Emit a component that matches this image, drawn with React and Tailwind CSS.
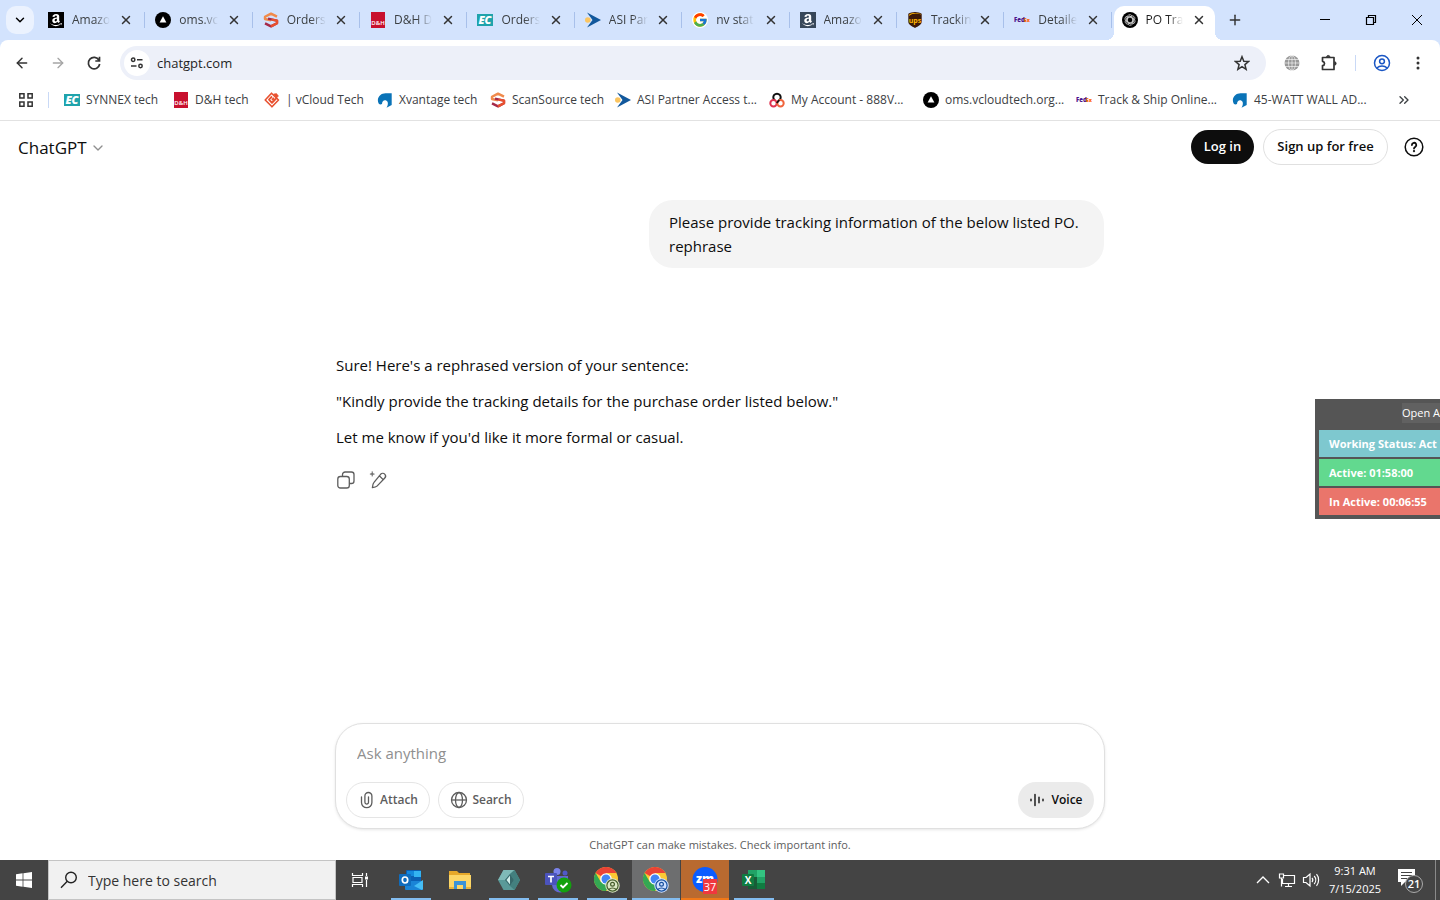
import React from 'react';
import clsx from 'clsx';
import { FcGoogle } from 'react-icons/fc';
import { FaAmazon } from 'react-icons/fa';
import { ArrowLeft, ArrowRight, ChevronDown, ChevronsRight, Plus, X } from 'lucide-react';

/* ---------- Favicons ---------- */

const AmazonIcon = ({ dark }) => (
    <span className={clsx('flex h-4 w-4 items-center justify-center text-white', dark ? 'bg-[#37475a]' : 'bg-black')}>
        <FaAmazon className="h-3.5 w-3.5" />
    </span>
);

const OmsIcon = () => (
    <svg viewBox="0 0 16 16" className="h-4 w-4">
        <circle cx="8" cy="8" r="8" fill="#000" />
        <path d="M8 4.2 11.4 10.6H4.6Z" fill="#fff" />
    </svg>
);

const ScanSourceIcon = () => (
    <svg viewBox="0 0 16 16" className="h-4 w-4" fill="none" strokeWidth="2.4" strokeLinejoin="round">
        <path d="M14 4.6 8 1.6 2 4.8V7l6 1.4" stroke="#f08a4b" />
        <path d="M5 6.6 14 8.6v2.6L8 14.4 2 11.4" stroke="#a52a4a" />
        <path d="M8.5 7.6 14 8.6v2.6L8 14.4" stroke="#e8502f" />
    </svg>
);

const DhIcon = () => (
    <svg viewBox="0 0 16 16" className="h-4 w-4">
        <rect x="1" width="14" height="16" fill="#c8102e" />
        <text x="8" y="13" fill="#fff" fontSize="6" fontWeight="600" textAnchor="middle" fontFamily="Open Sans">D&amp;H</text>
    </svg>
);

const EcIcon = () => (
    <svg viewBox="0 0 16 16" className="h-4 w-4">
        <rect y="2" width="16" height="12" fill="#1fa3ab" />
        <text x="8" y="12" fill="#fff" fontSize="11" fontWeight="800" fontStyle="italic" textAnchor="middle" fontFamily="Open Sans">EC</text>
    </svg>
);

const AsiIcon = () => (
    <svg viewBox="0 0 16 16" className="h-4 w-4">
        <path d="M2 0.5 16 8 2 15.5 7.5 8Z" fill="#12589c" />
        <circle cx="2.8" cy="8" r="2.8" fill="#fbc560" />
    </svg>
);

const GoogleIcon = () => (
    <span className="flex h-4 w-4 items-center justify-center rounded-full bg-white">
        <FcGoogle className="h-4 w-4" />
    </span>
);

const UpsIcon = () => (
    <svg viewBox="0 0 16 16" className="h-4 w-4">
        <path d="M8 0c2.5 0 5 .7 6.7 1.8V9.5c0 3.5-3.5 4.6-6.7 6.5-3.2-1.9-6.7-3-6.7-6.5V1.8C3 .7 5.5 0 8 0Z" fill="#3d1a08" />
        <path d="M2.2 3.9c3.2-2.9 8.4-2.8 11.7-1.4V2C11 .6 5 .3 2.2 2.4Z" fill="#ffb500" />
        <text x="8" y="10.5" fill="#ffb500" fontSize="7" fontWeight="700" textAnchor="middle" fontFamily="Open Sans">ups</text>
    </svg>
);

const FedexIcon = () => (
    <svg viewBox="0 0 16 16" className="h-4 w-4">
        <text x="0" y="10" fill="#4d148c" fontSize="6" fontWeight="800" fontFamily="Open Sans">Fed</text>
        <text x="10" y="10" fill="#ff6200" fontSize="5" fontWeight="800" fontFamily="Open Sans">Ex</text>
    </svg>
);

const VcloudIcon = () => (
    <svg viewBox="0 0 16 16" className="h-4 w-4" fill="none" stroke="#e8502f" strokeLinejoin="round">
        <path d="M7.5 1.2 14.5 8 8 14.8 1.2 8Z" strokeWidth="1.6" />
        <path d="M8 4.5 5 7.6l3 3.3 5-5.2M8 8l2-2" strokeWidth="1.8" />
        <path d="m9.5 2 3-.5 2 2.5-2 2Z" fill="#e8502f" strokeWidth="0.5" />
    </svg>
);

const XvantageIcon = () => (
    <svg viewBox="0 0 16 16" className="h-4 w-4" fill="#0a73b7">
        <path d="M1.8 11.8C-1.200 6 3.500 1.300 8.500 1.300h6.200V13l-5.200 2.800c1.600-2.800 2-6 0-7C7.200 7.600 5.200 9 5 12c-1.200.6-2.300.5-3.200-.2Z" />
    </svg>
);

const AccountIcon = () => (
    <svg viewBox="0 0 16 16" className="h-4 w-4" fill="none" strokeWidth="2">
        <path d="M6 8.500A3.700 3.700 0 1 1 10 8.500" stroke="#111" />
        <circle cx="4.5" cy="11.2" r="3.2" stroke="#e0314f" />
        <circle cx="11.5" cy="11.2" r="3.2" stroke="#f0643c" />
        <path d="M10.200 8 7.800 11" stroke="#111" />
    </svg>
);

const GptIcon = () => (
    <svg viewBox="0 0 16 16" className="h-4 w-4" fill="none" stroke="#ddd" strokeWidth="0.7">
        <circle cx="8" cy="8" r="8" fill="#000" stroke="none" />
        {[0, 60, 120, 180, 240, 300].map((angle) => (
            <path key={angle} d="M5.2 9.6V5.300a2.600 2.600 0 0 1 4.700-1.600M5.2 6.500 9 4.300l2.800 1.600" transform={`rotate(${angle} 8 8)`} />
        ))}
    </svg>
);

/* ---------- Browser chrome ---------- */

const tabs = [
    { title: 'Amazo', icon: <AmazonIcon /> },
    { title: 'oms.vc', icon: <OmsIcon /> },
    { title: 'Orders', icon: <ScanSourceIcon /> },
    { title: 'D&H D', icon: <DhIcon /> },
    { title: 'Orders', icon: <EcIcon /> },
    { title: 'ASI Par', icon: <AsiIcon /> },
    { title: 'nv stat', icon: <GoogleIcon /> },
    { title: 'Amazo', icon: <AmazonIcon dark /> },
    { title: 'Trackin', icon: <UpsIcon /> },
    { title: 'Detaile', icon: <FedexIcon /> },
    { title: 'PO Tra', icon: <GptIcon />, active: true },
];

const bookmarks = [
    { title: 'SYNNEX tech', icon: <EcIcon />, width: 'w-[109px]' },
    { title: 'D&H tech', icon: <DhIcon />, width: 'w-[91px]' },
    { title: '| vCloud Tech', icon: <VcloudIcon />, width: 'w-[113px]' },
    { title: 'Xvantage tech', icon: <XvantageIcon />, width: 'w-[113px]' },
    { title: 'ScanSource tech', icon: <ScanSourceIcon />, width: 'w-[125px]' },
    { title: 'ASI Partner Access t...', icon: <AsiIcon />, width: 'w-[154px]' },
    { title: 'My Account - 888V...', icon: <AccountIcon />, width: 'w-[154px]' },
    { title: 'oms.vcloudtech.org...', icon: <OmsIcon />, width: 'w-[153px]' },
    { title: 'Track & Ship Online...', icon: <FedexIcon />, width: 'w-[156px]' },
    { title: '45-WATT WALL AD...', icon: <XvantageIcon />, width: 'w-[150px]' },
];

const Tab = ({ title, icon, active }) => (
    <div className={clsx('relative flex h-[34px] min-w-0 flex-1 items-center pb-1.5', active && 'z-10')}>
        {active && (
            <div className="absolute inset-y-0 right-1 left-[2px] rounded-t-[10px] bg-white">
                <div className="absolute bottom-0 -left-2 h-2 w-2 bg-[radial-gradient(circle_at_0_0,transparent_8px,white_8px)]" />
                <div className="absolute -right-2 bottom-0 h-2 w-2 bg-[radial-gradient(circle_at_100%_0,transparent_8px,white_8px)]" />
            </div>
        )}
        <button type="button" className="relative flex min-w-0 flex-1 items-center gap-2 pl-[10px] text-left">
            <span className="shrink-0">{icon}</span>
            <span className={clsx('shrink-0 text-[12px] leading-4 whitespace-nowrap [mask-image:linear-gradient(to_right,black_60%,transparent)]', active ? 'text-[#1f1f1f]' : 'text-[#3c4043]')}>
                {title}
            </span>
        </button>
        <button type="button" aria-label={`Close ${title}`} className={clsx('relative flex h-4 w-4 shrink-0 items-center justify-center text-[#333]', active ? 'mr-3' : 'mr-2.5')}>
            <X className="h-3.5 w-3.5" strokeWidth={2.5} />
        </button>
        {!active && <span className="h-4 w-px bg-[#a8c0ea]" />}
    </div>
);

const TabStrip = () => (
    <div className="flex h-10 items-end bg-[#d3e3fd]">
        <button type="button" aria-label="Search tabs" className="mr-1 mb-1.5 ml-1.5 flex h-7 w-7 shrink-0 items-center justify-center rounded-[10px] bg-[#ebf2fe]">
            <ChevronDown className="h-3.5 w-3.5" strokeWidth={2.5} />
        </button>
        <div className="flex max-w-[1181px] min-w-0 flex-1">
            {tabs.map((tab, i) => <Tab key={i} {...tab} />)}
        </div>
        <button type="button" aria-label="New tab" className="mb-3 ml-2 flex h-4 w-4 shrink-0 items-center justify-center">
            <Plus className="h-4 w-4 shrink-0 text-[#333]" strokeWidth={2.2} />
        </button>
        <div className="ml-auto flex h-10 shrink-0 text-black">
            <button type="button" aria-label="Minimize" className="flex w-[46px] items-center justify-center">
                <svg viewBox="0 0 12 12" className="h-3 w-3" stroke="currentColor"><path d="M1 5.5h10" /></svg>
            </button>
            <button type="button" aria-label="Restore" className="flex w-[46px] items-center justify-center">
                <svg viewBox="0 0 12 12" className="h-3 w-3" fill="none" stroke="currentColor" strokeWidth="1.2">
                    <path d="M1.5 3.5h7v7h-7ZM3.5 3.5v-2h7v7h-2" />
                </svg>
            </button>
            <button type="button" aria-label="Close window" className="flex w-[46px] items-center justify-center">
                <svg viewBox="0 0 12 12" className="h-3 w-3" stroke="currentColor"><path d="m1 1 10 10M11 1 1 11" /></svg>
            </button>
        </div>
    </div>
);

const Toolbar = () => (
    <div className="bg-[#d3e3fd]">
        <div className="flex h-10 items-end rounded-t-lg bg-white text-[#333]">
            <div className="flex h-[34px] w-[120px] shrink-0 items-center gap-5 pl-3.5">
                <button type="button" aria-label="Back"><ArrowLeft className="h-4 w-4" strokeWidth={2.2} /></button>
                <button type="button" aria-label="Forward" className="text-[#a5a5a5]"><ArrowRight className="h-4 w-4" strokeWidth={2} /></button>
                <button type="button" aria-label="Reload">
                    <svg viewBox="0 0 16 16" className="h-4 w-4" fill="none" stroke="currentColor" strokeWidth="1.7">
                        <path d="M13 5.2A5.7 5.7 0 1 0 13.7 9M13.5 1.8V6H9.3" />
                    </svg>
                </button>
            </div>
            <div className="flex h-[34px] min-w-0 flex-1 items-center rounded-full bg-[#edf0f9] pr-4">
                <button type="button" aria-label="View site information" className="ml-1 flex h-[26px] w-[26px] items-center justify-center rounded-full bg-white">
                    <svg viewBox="0 0 16 16" className="h-4 w-4" fill="none" stroke="#333" strokeWidth="1.5">
                        <circle cx="4.2" cy="4.8" r="1.7" />
                        <path d="M8 4.8h5.5M2 11h5.5" />
                        <circle cx="11.5" cy="11" r="1.7" />
                    </svg>
                </button>
                <input aria-label="Address" defaultValue="chatgpt.com" className="ml-[7px] min-w-0 flex-1 bg-transparent pt-px text-[13px] text-[#1f1f1f] outline-none" />
                <button type="button" aria-label="Bookmark this tab">
                    <svg viewBox="0 0 16 16" className="h-4 w-4" fill="none" stroke="#333" strokeWidth="1.5">
                        <path d="m8 1.7 1.8 4.5 4.8.3-3.7 3.1 1.2 4.7L8 11.7l-4.100 2.600 1.200-4.700L1.400 6.500l4.800-.3Z" />
                    </svg>
                </button>
            </div>
            <div className="flex h-[34px] w-[174px] shrink-0 items-center pl-[18px]">
                <button type="button" aria-label="Translate">
                    <svg viewBox="0 0 16 16" className="h-4 w-4" fill="none" stroke="#fff" strokeWidth="0.6">
                        <circle cx="8" cy="8" r="7.5" fill="#999" stroke="none" />
                        <ellipse cx="8" cy="8" rx="3.5" ry="7.5" />
                        <path d="M8 0v16M0 8h16M1 4.5h14M1 11.5h14" />
                    </svg>
                </button>
                <button type="button" aria-label="Extensions" className="ml-5">
                    <svg viewBox="0 0 18 18" className="h-[18px] w-[18px]" fill="none" stroke="#333" strokeWidth="1.7" strokeLinejoin="round">
                        <path d="M2.5 3.5h11.5v12H2.5v-3.800c2.700-.5 2.700-3.900 0-4.400Z" />
                        <path d="M6.5 2.800a1.800 1.800 0 0 1 3.500 0ZM14.800 7.700a1.800 1.800 0 0 1 0 3.500Z" fill="#333" strokeWidth="0.8" />
                    </svg>
                </button>
                <span className="ml-[17px] h-4 w-px bg-[#c9d9f6]" />
                <button type="button" aria-label="Profile" className="ml-[17px]">
                    <svg viewBox="0 0 18 18" className="h-[18px] w-[18px]" fill="none" stroke="#1a56c4" strokeWidth="1.5">
                        <circle cx="9" cy="9" r="7.5" />
                        <circle cx="9" cy="7.3" r="2.4" />
                        <path d="M3.800 14c2.800-2.700 7.600-2.700 10.400 0" />
                    </svg>
                </button>
                <button type="button" aria-label="Menu" className="ml-[19px]">
                    <svg viewBox="0 0 16 16" className="h-4 w-4" fill="#333">
                        <circle cx="8" cy="3" r="1.5" /><circle cx="8" cy="8" r="1.5" /><circle cx="8" cy="13" r="1.5" />
                    </svg>
                </button>
            </div>
        </div>
    </div>
);

const BookmarksBar = () => (
    <nav className="flex h-[41px] items-center border-b border-[#e2e2e2] bg-white text-[#3c4043]">
        <button type="button" aria-label="Apps" className="ml-[18px] shrink-0">
            <svg viewBox="0 0 16 16" className="h-4 w-4" fill="none" stroke="#333" strokeWidth="1.5">
                <path d="M1.8 1.8h4.200v4.200h-4.200ZM10 1.800h4.200v4.200h-4.200ZM1.800 10h4.200v4.200h-4.200ZM10 10h4.200v4.200h-4.200Z" />
            </svg>
        </button>
        <span className="mr-[15px] ml-3.5 h-4 w-px shrink-0 bg-[#c9d9f6]" />
        <div className="flex min-w-0 flex-1 overflow-hidden">
            {bookmarks.map(({ title, icon, width }) => (
                <a key={title} href="#bookmark" className={clsx('flex shrink-0 items-center gap-1.5 text-[12px] leading-5 whitespace-nowrap', width)}>
                    <span className="shrink-0">{icon}</span>
                    {title}
                </a>
            ))}
        </div>
        <button type="button" aria-label="More bookmarks" className="mr-7 shrink-0"><ChevronsRight className="h-4 w-4" /></button>
    </nav>
);

/* ---------- Chat page ---------- */

const ChatHeader = () => (
    <header className="flex h-[52px] items-center pr-4 pl-[18px] text-[#0d0d0d]">
        <button type="button" className="flex items-center gap-[3px] pt-px text-[17px] leading-6">
            ChatGPT
            <ChevronDown className="h-4 w-4 text-[#8f8f8f]" strokeWidth={2} />
        </button>
        <div className="ml-auto flex items-center text-[13px] font-semibold">
            <button type="button" className="h-[34px] w-[63px] rounded-full bg-[#0d0d0d] text-white">Log in</button>
            <button type="button" className="ml-[9px] h-9 w-[125px] rounded-full border border-[#e0e0e0]">Sign up for free</button>
            <button type="button" aria-label="Help" className="ml-4">
                <svg viewBox="0 0 20 20" className="h-5 w-5" fill="none" stroke="currentColor" strokeWidth="1.5" strokeLinecap="round">
                    <circle cx="10" cy="10" r="8.8" />
                    <path d="M7.9 8a2.2 2.2 0 1 1 3.300 1.900c-.8.5-1.200.8-1.200 1.600" strokeWidth="1.8" />
                    <circle cx="10" cy="14.2" r="0.4" fill="currentColor" />
                </svg>
            </button>
        </div>
    </header>
);

const Conversation = () => (
    <div className="mx-auto w-full max-w-3xl text-[15px] leading-6 text-[#0d0d0d]">
        <div className="mt-[27px] ml-auto w-[455px] max-w-full rounded-3xl bg-[#f4f4f4] px-5 py-2.5">
            Please provide tracking information of the below listed PO.
            <br />
            rephrase
        </div>
        <div className="mt-[85px] flex flex-col gap-3">
            <p>Sure! Here's a rephrased version of your sentence:</p>
            <p>"Kindly provide the tracking details for the purchase order listed below."</p>
            <p>Let me know if you'd like it more formal or casual.</p>
        </div>
        <div className="mt-[21px] flex gap-3 text-[#5d5d5d]">
            <button type="button" aria-label="Copy">
                <svg viewBox="0 0 20 20" className="h-5 w-5" fill="none" stroke="currentColor" strokeWidth="1.3">
                    <rect x="1.8" y="6.5" width="11.5" height="11.5" rx="2.6" />
                    <path d="M6.5 6.500V4.600A2.600 2.600 0 0 1 9.100 2h6.300A2.600 2.600 0 0 1 18 4.600v6.300a2.600 2.600 0 0 1-2.600 2.600h-2.100" />
                </svg>
            </button>
            <button type="button" aria-label="Edit in canvas">
                <svg viewBox="0 0 20 20" className="h-5 w-5" fill="none" stroke="currentColor" strokeWidth="1.3" strokeLinejoin="round" strokeLinecap="round">
                    <path d="M12.600 4.300c1.200-1.200 3-1.300 4.100-.2s1.100 2.900-.1 4.100l-7.600 7.900c-.9.900-2.300 1.300-4.600 1.500.2-2.300.5-4 1.400-5ZM11.300 5.700l3.900 3.900" />
                    <path d="M4.200 1.800c.2 1.700.6 2.100 2.300 2.300-1.700.2-2.100.6-2.300 2.300-.2-1.700-.6-2.100-2.300-2.300 1.700-.2 2.100-.6 2.300-2.300Z" fill="currentColor" strokeWidth="0.5" />
                </svg>
            </button>
        </div>
    </div>
);

const Composer = () => (
    <div className="mx-auto w-full max-w-[770px]">
        <form className="rounded-[28px] border border-[#e0e0e0] bg-white px-[10px] pt-[17px] pb-[10px] shadow-[0_1px_3px_rgba(0,0,0,0.1)]" onSubmit={(e) => e.preventDefault()}>
            <input aria-label="Message" placeholder="Ask anything" className="block h-6 w-full px-[11px] text-[15px] leading-6 outline-none placeholder:text-[#8f8f8f]" />
            <div className="mt-[17px] flex gap-2 text-[12px] font-semibold text-[#5d5d5d]">
                <button type="button" className="flex h-9 w-[84px] items-center justify-center gap-1 rounded-full border border-[#e5e5e5]">
                    <svg viewBox="0 0 18 18" className="h-[18px] w-[18px]" fill="none" stroke="currentColor" strokeWidth="1.3" strokeLinecap="round">
                        <path d="M3.500 6v5.500a5.200 5.200 0 0 0 5.200 5.200 5.200 5.200 0 0 0 5.200-5.200V5a3.500 3.500 0 0 0-7 0v6.300a1.800 1.800 0 0 0 3.600 0V5.800" />
                    </svg>
                    Attach
                </button>
                <button type="button" className="flex h-9 w-[86px] items-center justify-center gap-1 rounded-full border border-[#e5e5e5]">
                    <svg viewBox="0 0 18 18" className="h-[18px] w-[18px]" fill="none" stroke="currentColor" strokeWidth="1.3">
                        <circle cx="9" cy="9" r="7.5" />
                        <ellipse cx="9" cy="9" rx="3.5" ry="7.5" />
                        <path d="M1.5 9h15" />
                    </svg>
                    Search
                </button>
                <button type="button" className="ml-auto flex h-9 w-[76px] items-center justify-center gap-1.5 rounded-full bg-[#ebebeb] text-[#0d0d0d]">
                    <svg viewBox="0 0 16 16" className="h-4 w-4" stroke="currentColor" strokeWidth="1.4" strokeLinecap="round">
                        <path d="M2 7.200v1.600M6 2.500v11M10 5.200v5.600M14 7.200v1.600" />
                    </svg>
                    Voice
                </button>
            </div>
        </form>
        <p className="mt-2 mb-[7px] text-center text-[11px] leading-4 text-[#5d5d5d]">ChatGPT can make mistakes. Check important info.</p>
    </div>
);

// Always-on-top window that hangs over the right edge of the desktop
const StatusWidget = () => (
    <aside className="absolute top-[399px] right-0 w-[125px] overflow-hidden bg-[#555] pt-1 pb-1 pl-1 text-white">
        <div className="flex h-[27px] justify-end">
            <button type="button" className="h-5 w-[38px] bg-[#616161] text-center text-[11px] leading-5 whitespace-nowrap">Open A</button>
        </div>
        <div className="flex flex-col gap-[2px] text-[11px] leading-[27px] font-bold whitespace-nowrap">
            <div className="bg-[#7ec8cf] pl-2.5">Working Status: Act</div>
            <div className="bg-[#62d98f] pl-2.5">Active: 01:58:00</div>
            <div className="bg-[#ea756b] pl-2.5">In Active: 00:06:55</div>
        </div>
    </aside>
);

/* ---------- Taskbar ---------- */

const OutlookIcon = () => (
    <svg viewBox="0 0 24 24" className="h-6 w-6">
        <rect x="7" y="2" width="15" height="12" rx="1" fill="#0a5fb4" />
        <path d="M8 3h7v5H8Z" fill="#1488dc" />
        <path d="M15 3h7v6h-7Z" fill="#33b3f1" />
        <path d="M6 13h18v8a1 1 0 0 1-1 1H7a1 1 0 0 1-1-1Z" fill="#1a84d6" />
        <path d="m24 12-9 6 8 4 1-1Z" fill="#45bdf5" />
        <rect y="6" width="12" height="12" rx="1" fill="#0f6cbd" />
        <ellipse cx="6" cy="12" rx="2.7" ry="3" fill="none" stroke="#fff" strokeWidth="1.7" />
    </svg>
);

const ExplorerIcon = () => (
    <svg viewBox="0 0 24 24" className="h-6 w-6">
        <path d="M1 3h8l2 2h11v4H1Z" fill="#e6a82a" />
        <path d="M1 7h22v14H1Z" fill="#fcd667" />
        <path d="M6 13h12v8h-3v-4H9v4H6Z" fill="#3b93d8" />
        <path d="M1 19h5v2H1ZM18 19h5v2h-5Z" fill="#e9b53d" />
    </svg>
);

const HexIcon = () => (
    <svg viewBox="0 0 24 24" className="h-6 w-6">
        <path d="M6.500 2h11L23 12l-5.500 10h-11L1 12Z" fill="#5a9a99" />
        <path d="M6.500 2h11L13 6l-5 6H1Z" fill="#7fbab7" />
        <path d="M17.500 2 23 12l-5.500 10L13 18l4-6-4-6Z" fill="#43807f" />
        <path d="m13 6 4 6-4 6-5-6Z" fill="#37696b" />
        <path d="m13 7.500-3.500 4.500 3.500 4.500Z" fill="#d0eeea" />
    </svg>
);

const TeamsIcon = () => (
    <svg viewBox="0 0 28 26" className="h-[26px] w-7">
        <circle cx="13" cy="4.5" r="3.5" fill="#7b83eb" />
        <circle cx="21" cy="6" r="2.5" fill="#5059c9" />
        <path d="M8 9h16v8a7 7 0 0 1-16 1Z" fill="#6269d2" />
        <rect x="1" y="6" width="12" height="12" rx="1" fill="#4b53bc" />
        <path d="M4 9.500h6M7 9.500V15.500" stroke="#fff" strokeWidth="1.7" />
        <circle cx="20" cy="18" r="7.5" fill="#13a10e" />
        <path d="m16.500 18 2.500 2.500 4.500-4.500" fill="none" stroke="#fff" strokeWidth="1.8" />
    </svg>
);

const ChromeIcon = ({ badge }) => (
    <svg viewBox="0 0 26 26" className="h-[26px] w-[26px]">
        <circle cx="12" cy="12" r="12" fill="#fcc934" />
        <path d="M12 12 1.600 6A12 12 0 0 1 22.400 6H12Z" fill="#ea4335" />
        <path d="M1.600 6A12 12 0 0 0 12 24L17.200 15 12 12 6.800 15Z" fill="#34a853" />
        <circle cx="12" cy="12" r="5.8" fill="#fff" />
        <circle cx="12" cy="12" r="4.5" fill="#4285f4" />
        <circle cx="18.5" cy="18.5" r="7.2" fill={badge === 'blue' ? '#cfe1ff' : '#dbe8c4'} />
        <g fill="none" stroke={badge === 'blue' ? '#164f9e' : '#455c2b'} strokeWidth="1.2">
            <circle cx="18.5" cy="18.5" r="5.6" />
            <circle cx="18.5" cy="17.2" r="1.9" />
            <path d="M14.800 22.500c1.800-2 5.600-2 7.400 0" />
        </g>
    </svg>
);

const ZoomIcon = () => (
    <svg viewBox="0 0 28 28" className="h-7 w-7">
        <circle cx="14" cy="13.500" r="12.500" fill="#0b5cff" />
        <text x="14" y="17" fill="#fff" fontSize="12" fontWeight="800" textAnchor="middle" fontFamily="Open Sans">zm</text>
        <rect x="12" y="13" width="14" height="15" fill="#f0383e" />
        <text x="19" y="25" fill="#fff" fontSize="11" textAnchor="middle" fontFamily="Open Sans">37</text>
    </svg>
);

const ExcelIcon = () => (
    <svg viewBox="0 0 24 24" className="h-6 w-6">
        <path d="M6 2h9v7H6Z" fill="#21a366" />
        <path d="M15 2h8v7h-8Z" fill="#33c481" />
        <path d="M6 9h9v12H6Z" fill="#185c37" />
        <path d="M15 9h8v6h-8Z" fill="#21a366" />
        <path d="M15 15h8v6h-8Z" fill="#107c41" />
        <rect y="6" width="12" height="12" rx="1" fill="#107c41" />
        <text x="6" y="15.5" fill="#fff" fontSize="10" fontWeight="700" textAnchor="middle" fontFamily="Open Sans">X</text>
    </svg>
);

const apps = [
    { name: 'Outlook', icon: <OutlookIcon />, open: true },
    { name: 'File Explorer', icon: <ExplorerIcon /> },
    { name: 'Tracker', icon: <HexIcon />, open: true },
    { name: 'Teams', icon: <TeamsIcon />, open: true },
    { name: 'Chrome profile 1', icon: <ChromeIcon badge="green" />, open: true },
    { name: 'Chrome profile 2', icon: <ChromeIcon badge="blue" />, state: 'bg-[#6d6e6f]', bar: 'w-full bg-[#83bdf0]' },
    { name: 'Zoom', icon: <ZoomIcon />, state: 'bg-[#b96a30]', bar: 'w-full bg-[#f07818]' },
    { name: 'Excel', icon: <ExcelIcon />, open: true },
];

const Taskbar = () => (
    <footer className="flex h-10 shrink-0 items-stretch bg-[#444] text-white">
        <button type="button" aria-label="Start" className="flex w-12 shrink-0 items-center justify-center">
            <svg viewBox="0 0 16 16" className="h-4 w-4" fill="#fff">
                <path d="M0 2.200 6.600 1.300v6.300H0ZM7.400 1.200 16 0v7.600H7.400ZM0 8.400h6.600v6.300L0 13.800ZM7.400 8.400H16V16l-8.600-1.200Z" />
            </svg>
        </button>
        <label className="flex w-72 items-center gap-[10px] border border-[#c4c4c4] bg-[#f1f1f1] pl-[11px] text-[#222]">
            <svg viewBox="0 0 18 18" className="h-[18px] w-[18px] shrink-0" fill="none" stroke="currentColor" strokeWidth="1.4">
                <circle cx="11" cy="6.5" r="5.3" />
                <path d="M7.300 10.300 1 16.800" />
            </svg>
            <input aria-label="Search" placeholder="Type here to search" className="w-full min-w-0 bg-transparent text-[14px] outline-none placeholder:text-[#333]" />
        </label>
        <button type="button" aria-label="Task view" className="flex w-12 shrink-0 items-center justify-center">
            <svg viewBox="0 0 18 18" className="h-[18px] w-[18px]" fill="none" stroke="#fff" strokeWidth="1.2">
                <path d="M1.500 2v2.500h10V2M1.500 16v-2.500h10V16M2 6.500h9v5H2ZM15.500 2v3M15.500 9v7" />
                <path d="M14 5.500h3v3h-3Z" fill="#fff" stroke="none" />
            </svg>
        </button>
        <div className="ml-[3px] flex shrink-0">
            {apps.map(({ name, icon, open, state, bar }) => (
                <button key={name} type="button" aria-label={name} className={clsx('relative mr-px flex w-12 items-center justify-center', state)}>
                    {icon}
                    {(open || bar) && <span className={clsx('absolute bottom-0 h-[2px]', bar || 'w-10 bg-[#83bdf0]')} />}
                </button>
            ))}
        </div>
        <div className="ml-auto flex shrink-0 items-center">
            <button type="button" aria-label="Show hidden icons">
                <svg viewBox="0 0 14 14" className="h-3.5 w-3.5" fill="none" stroke="#fff" strokeWidth="1.3"><path d="m1 10 6-6 6 6" /></svg>
            </button>
            <button type="button" aria-label="Network" className="ml-2">
                <svg viewBox="0 0 18 18" className="h-[18px] w-[18px]" fill="none" stroke="#fff" strokeWidth="1.2">
                    <path d="M5 4.500h11.500v8H4.500V8M10.500 12.500v3M7 15.500h7M1.500 3h4v4h-4ZM3.500 7v8.500" />
                </svg>
            </button>
            <button type="button" aria-label="Volume" className="ml-1.5">
                <svg viewBox="0 0 18 18" className="h-[18px] w-[18px]" fill="none" stroke="#fff" strokeWidth="1.2">
                    <path d="M1.500 6.500h2.500L8 3v12l-4-3.500H1.500ZM10 7c1 1.200 1 2.800 0 4M12.200 5c2 2.300 2 5.700 0 8M14.500 3.200c2.800 3.200 2.800 8.400 0 11.600" />
                </svg>
            </button>
            <div className="w-[70px] text-center text-[11px] leading-[18px]">
                <div>9:31 AM</div>
                <div>7/15/2025</div>
            </div>
            <button type="button" aria-label="Notifications" className="mr-[11px] ml-1.5">
                <svg viewBox="0 0 28 26" className="h-[26px] w-7">
                    <path d="M2 2h17v13H9l-4 4v-4H2Z" fill="#fff" />
                    <path d="M5 5.500h11M5 8.500h11M5 11.500h6" stroke="#444" />
                    <circle cx="18" cy="17" r="8.5" fill="#444" stroke="#aaa" />
                    <text x="18" y="21" fill="#fff" fontSize="11" fontWeight="600" textAnchor="middle" fontFamily="Open Sans">21</text>
                </svg>
            </button>
            <span className="mr-1 h-10 w-px bg-[#8a8a8a]" />
        </div>
    </footer>
);

const App = () => {
    return (
        <div className="relative flex min-h-screen flex-col overflow-hidden bg-white font-['Open_Sans','Noto_Sans',sans-serif]">
            <TabStrip />
            <Toolbar />
            <BookmarksBar />
            <ChatHeader />
            <main className="flex flex-1 flex-col justify-between">
                <Conversation />
                <Composer />
            </main>
            <Taskbar />
            <StatusWidget />
        </div>
    );
};

export default App;
